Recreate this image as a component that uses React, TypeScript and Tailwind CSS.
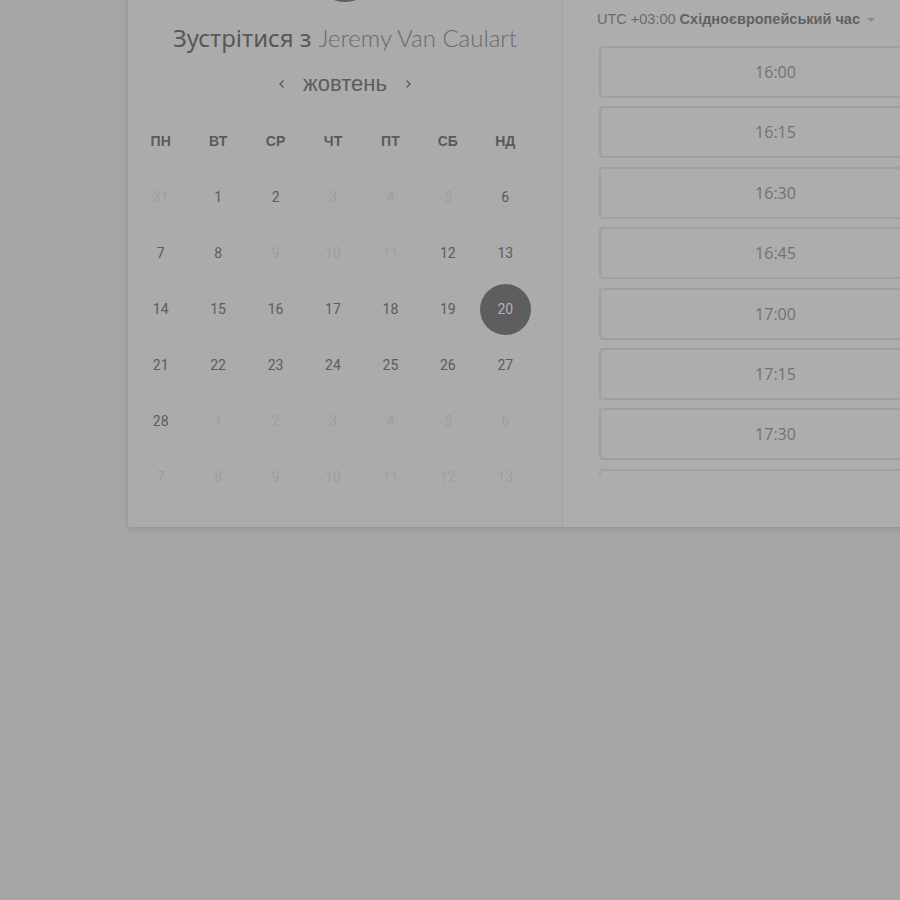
import React from "react";

type Day = { n: number; muted?: boolean; selected?: boolean };

const weekdays = ["ПН", "ВТ", "СР", "ЧТ", "ПТ", "СБ", "НД"];

const weeks: Day[][] = [
  [{ n: 31, muted: true }, { n: 1 }, { n: 2 }, { n: 3, muted: true }, { n: 4, muted: true }, { n: 5, muted: true }, { n: 6 }],
  [{ n: 7 }, { n: 8 }, { n: 9, muted: true }, { n: 10, muted: true }, { n: 11, muted: true }, { n: 12 }, { n: 13 }],
  [{ n: 14 }, { n: 15 }, { n: 16 }, { n: 17 }, { n: 18 }, { n: 19 }, { n: 20, selected: true }],
  [{ n: 21 }, { n: 22 }, { n: 23 }, { n: 24 }, { n: 25 }, { n: 26 }, { n: 27 }],
  [{ n: 28 }, { n: 1, muted: true }, { n: 2, muted: true }, { n: 3, muted: true }, { n: 4, muted: true }, { n: 5, muted: true }, { n: 6, muted: true }],
  [{ n: 7, muted: true }, { n: 8, muted: true }, { n: 9, muted: true }, { n: 10, muted: true }, { n: 11, muted: true }, { n: 12, muted: true }, { n: 13, muted: true }],
];

const slots = ["16:00", "16:15", "16:30", "16:45", "17:00", "17:15", "17:30", "17:45"];

export default function App() {
  return (
    <div className="min-h-screen w-full overflow-hidden bg-[#a6a6a6]">
      {/* booking card, scrolled so its top is out of view */}
      <div className="ml-[128px] mt-[-100px] flex w-[860px] bg-[#ababab] shadow-[0_2px_6px_rgba(0,0,0,0.12)]">
        {/* calendar side */}
        <div className="flex w-[435px] shrink-0 flex-col items-center border-r border-[#a4a4a4] pt-[38px] pb-[22px]">
          <div className="h-16 w-16 rounded-full bg-[#5c5c5c]" />
          <div
            className="mt-[21px] flex h-[30px] items-center whitespace-nowrap text-[24px] leading-none"
            style={{ fontFamily: '"Noto Sans", sans-serif' }}
          >
            <span className="text-[#585858]">Зустрітися з</span>
            <span className="ml-[7px] font-light text-[#6a6a6a]" style={{ fontFamily: '"Lato", "Noto Sans", sans-serif' }}>
              Jeremy Van Caulart
            </span>
          </div>
          <div
            className="mt-[17px] flex h-[28px] items-center gap-[16px] text-[#5c5c5c]"
            style={{ fontFamily: '"Liberation Sans", Arial, sans-serif' }}
          >
            <svg width="10" height="10" viewBox="0 0 10 10" fill="none" stroke="currentColor" strokeWidth="1.4">
              <path d="M6.5 1.5 3 5l3.5 3.5" />
            </svg>
            <span className="text-[22px] leading-none">жовтень</span>
            <svg width="10" height="10" viewBox="0 0 10 10" fill="none" stroke="currentColor" strokeWidth="1.4">
              <path d="M3.5 1.5 7 5 3.5 8.5" />
            </svg>
          </div>
          <div className="mt-[15px] w-full pl-[4px]">
            <div className="grid w-[402px] grid-cols-7">
              {weekdays.map((w) => (
                <div
                  key={w}
                  className="flex h-[56px] items-center justify-center text-[14px] font-bold text-[#5a5a5a]"
                  style={{ fontFamily: '"Liberation Sans", Arial, sans-serif' }}
                >
                  {w}
                </div>
              ))}
              {weeks.flat().map((d, i) => (
                <div key={i} className="flex h-[56px] items-center justify-center">
                  {d.selected ? (
                    <div
                      className="flex h-[51px] w-[51px] items-center justify-center rounded-full bg-[#5e5e5e] text-[14px] text-[#b3b3b3]"
                      style={{ fontFamily: "Roboto, sans-serif" }}
                    >
                      {d.n}
                    </div>
                  ) : (
                    <span
                      className={d.muted ? "text-[14px] text-[#9e9e9e]" : "text-[14px] text-[#5c5c5c]"}
                      style={{ fontFamily: "Roboto, sans-serif" }}
                    >
                      {d.n}
                    </span>
                  )}
                </div>
              ))}
            </div>
          </div>
        </div>

        {/* time slots side */}
        <div className="flex w-[425px] shrink-0 flex-col bg-[#adadad] px-[36px] pt-[75px] pb-[51px]">
          <div
            className="flex h-[28px] items-center justify-center text-[20px] font-bold text-[#585858]"
            style={{ fontFamily: '"Liberation Sans", Arial, sans-serif' }}
          >
            Оберіть дату
          </div>
          <div
            className="mt-[7px] ml-[-2px] flex h-5 items-center gap-[4px] whitespace-nowrap text-[14.5px] text-[#6a6a6a]"
            style={{ fontFamily: '"Liberation Sans", Arial, sans-serif' }}
          >
            <span>UTC +03:00</span>
            <span className="font-bold text-[#626262]">Східноєвропейський час</span>
            <svg width="8" height="5" viewBox="0 0 8 5" className="ml-[3px]">
              <path d="M0 0h8L4 4z" fill="#8a8a8a" />
            </svg>
          </div>
          <div className="mt-[16px] flex h-[430px] flex-col gap-[8.4px] overflow-hidden">
            {slots.map((s) => (
              <div
                key={s}
                className="flex h-[52px] shrink-0 items-center justify-center rounded-[4px] border-2 border-[#a0a0a0] text-[16px] text-[#727272]"
                style={{ fontFamily: '"Open Sans", sans-serif' }}
              >
                {s}
              </div>
            ))}
          </div>
        </div>
      </div>
    </div>
  );
}
